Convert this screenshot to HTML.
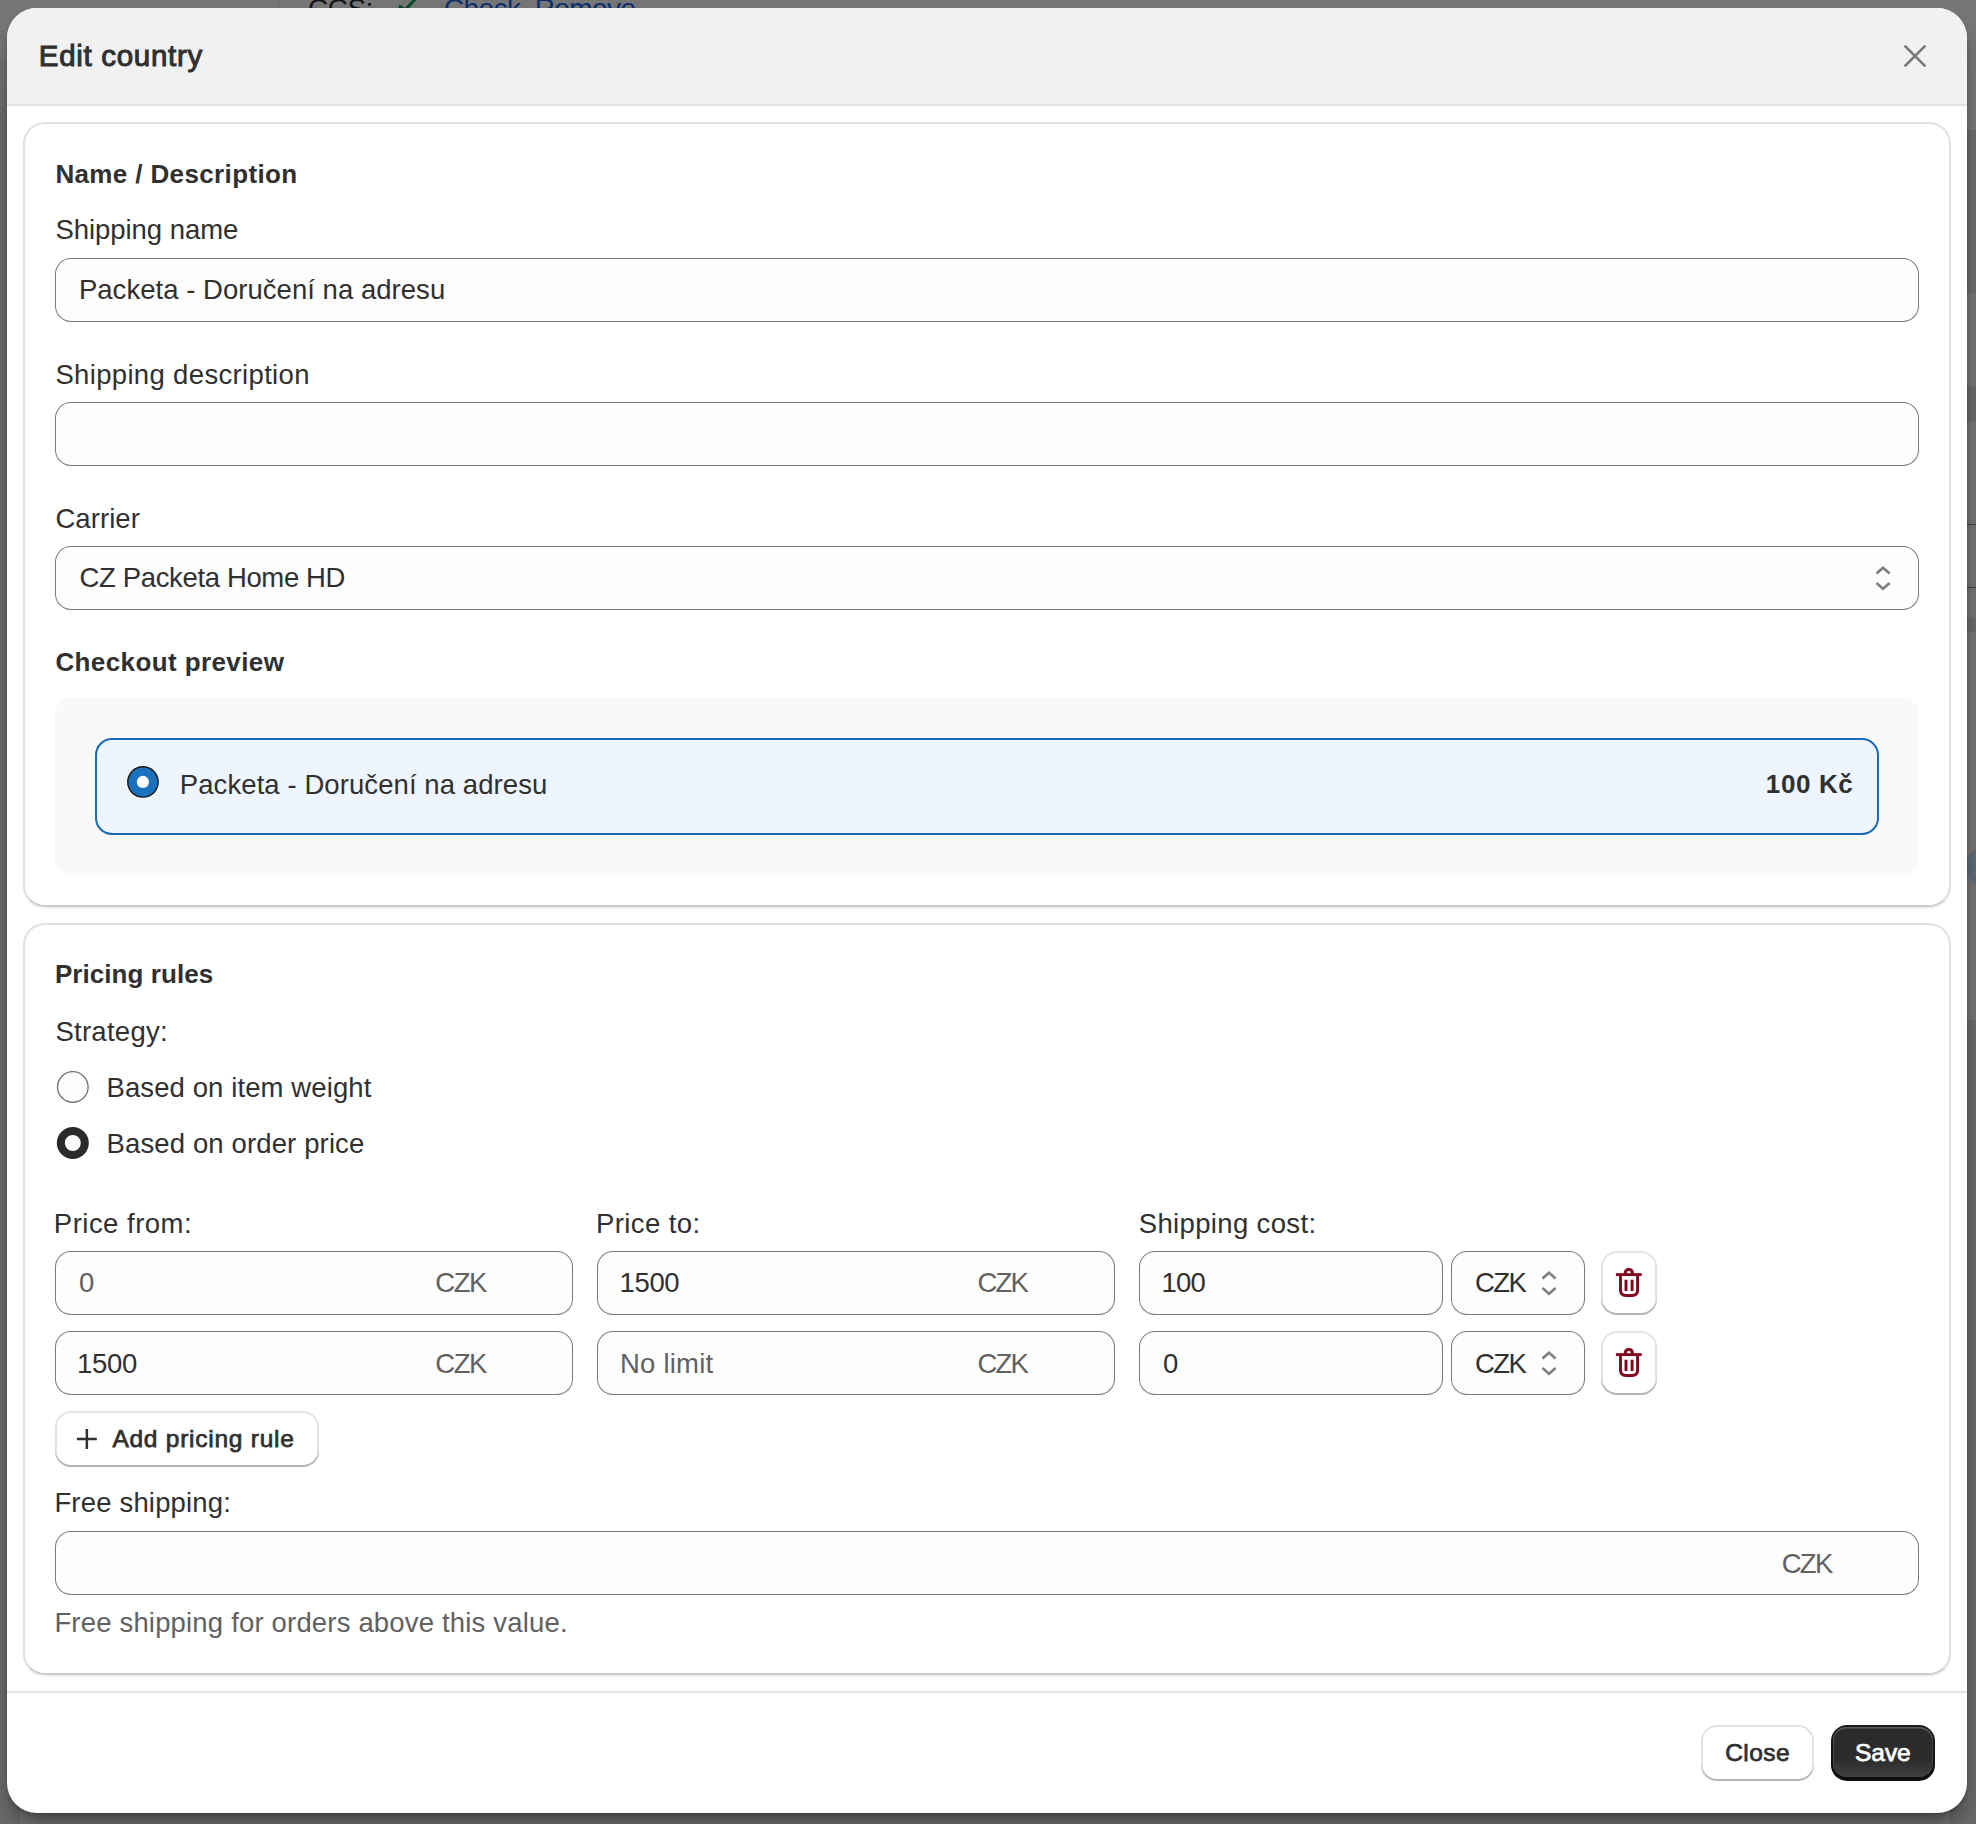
<!DOCTYPE html>
<html><head><meta charset="utf-8"><title>Edit country</title>
<style>
html,body{margin:0;padding:0;}
body{width:1976px;height:1824px;position:relative;overflow:hidden;background:#747474;font-family:"Liberation Sans",sans-serif;}
.a{position:absolute;box-sizing:border-box;}
.t{position:absolute;white-space:nowrap;line-height:1;font-family:"Liberation Sans",sans-serif;}
.modal{left:7px;top:8px;width:1960px;height:1805px;border-radius:30px;background:#ffffff;box-shadow:0 16px 24px -6px rgba(0,0,0,0.45),0 3px 5px -1px rgba(0,0,0,0.2);overflow:hidden;}
.hdr{left:7px;top:8px;width:1960px;height:98px;background:#f1f1f1;border-bottom:2px solid #e3e3e3;border-radius:30px 30px 0 0;}
.card{background:#ffffff;border:2px solid #e0e0e0;border-bottom-color:#cdcdcd;border-radius:22px;box-shadow:0 2px 0 #f0f0f0;}
.fld{background:#fdfdfd;border:1px solid #7a7a7a;border-top-color:#767a7e;border-radius:16px;}
.btn{background:#ffffff;border-radius:16px;box-shadow:inset 0 -2px 0 #b5b5b5, inset 0 0 0 2px #e3e3e3;}

</style></head>
<body>
<div class="a" style="left:0;top:0;width:1976px;height:1824px;background:#767676"></div>
<div class="a" style="left:0;top:60px;width:20px;height:1764px;background:linear-gradient(#747474,#6b6b6b 60px)"></div>
<div class="a" style="left:1950px;top:130px;width:26px;height:163px;background:#6b6b6b"></div>
<div class="a" style="left:1950px;top:293px;width:26px;height:94px;background:#747474"></div>
<div class="a" style="left:1950px;top:387px;width:26px;height:34px;background:#686868"></div>
<div class="a" style="left:1950px;top:421px;width:26px;height:600px;background:#737373"></div>
<div class="a" style="left:1950px;top:524px;width:26px;height:1px;background:#3f3f3f"></div>
<div class="a" style="left:1950px;top:587px;width:26px;height:1px;background:#3f3f3f"></div>
<div class="a" style="left:1950px;top:618px;width:26px;height:14px;background:#6a6a6a"></div>
<div class="a" style="left:1966px;top:846px;width:42px;height:42px;border-radius:50%;background:#5d6a76"></div>
<div class="a" style="left:1950px;top:1020px;width:26px;height:804px;background:#6a6a6a"></div>
<div class="a" style="left:278px;top:0;width:1px;height:10px;background:#6a6a6a"></div>
<div class="t" style="left:308px;top:-5px;font-size:28px;letter-spacing:-0.5px;color:#151515">CCS:</div>
<svg class="a" style="left:396px;top:-4px" width="28" height="14" viewBox="0 0 28 14"><path d="M3 10 L9 14 L24 -2" stroke="#0c4a2c" stroke-width="3" fill="none"/></svg>
<div class="t" style="left:444px;top:-5px;font-size:28px;letter-spacing:-0.6px;color:#0b2f6e">Check&nbsp; Remove</div>
<div class="a modal"></div>
<div class="a hdr"></div>
<svg class="a" style="left:1900px;top:41px" width="30" height="30" viewBox="0 0 30 30"><path d="M4.6 4.6 L25.4 25.4 M25.4 4.6 L4.6 25.4" stroke="#787878" stroke-width="2.7" fill="none"/></svg>
<div class="a card" style="left:23px;top:122px;width:1928px;height:785px"></div>
<div class="a card" style="left:23px;top:923px;width:1928px;height:752px"></div>
<div class="a" style="left:7px;top:1691px;width:1960px;height:2px;background:#e3e3e3"></div>
<div class="a fld" style="left:55px;top:258px;width:1864px;height:64px"></div>
<div class="a fld" style="left:55px;top:402px;width:1864px;height:64px"></div>
<div class="a fld" style="left:55px;top:546px;width:1864px;height:64px"></div>
<svg class="a" style="left:1873px;top:562px" width="20" height="32" viewBox="0 0 20 32"><path d="M3.5 11.5 L10 5.8 L16.6 11.5 M3.5 21 L10 26.7 L16.6 21" stroke="#7e7e7e" stroke-width="2.6" fill="none"/></svg>
<div class="a" style="left:55px;top:698px;width:1864px;height:177px;background:#f9f9f9;border-radius:16px"></div>
<div class="a" style="left:95px;top:738px;width:1784px;height:97px;background:#eef5fe;border:2px solid #1a6ab5;border-radius:17px"></div>
<svg class="a" style="left:120px;top:760px" width="46" height="46" viewBox="0 0 46 46"><circle cx="22.95" cy="21.9" r="15.2" fill="#1a72bf" stroke="#1a1a1a" stroke-width="1.4"/><circle cx="22.9" cy="21.95" r="6.1" fill="#ffffff"/></svg>
<svg class="a" style="left:50px;top:1064px" width="46" height="102" viewBox="0 0 46 102"><circle cx="22.8" cy="23" r="15.3" fill="#fdfdfd" stroke="#6f6f6f" stroke-width="1.3"/><circle cx="22.8" cy="79" r="12" fill="#fdfdfd" stroke="#2a2a2a" stroke-width="8"/></svg>
<div class="a fld" style="left:55px;top:1251px;width:518px;height:64px"></div>
<div class="a fld" style="left:597px;top:1251px;width:518px;height:64px"></div>
<div class="a fld" style="left:1139px;top:1251px;width:304px;height:64px"></div>
<div class="a fld" style="left:1451px;top:1251px;width:134px;height:64px"></div>
<div class="a fld" style="left:55px;top:1331px;width:518px;height:64px"></div>
<div class="a fld" style="left:597px;top:1331px;width:518px;height:64px"></div>
<div class="a fld" style="left:1139px;top:1331px;width:304px;height:64px"></div>
<div class="a fld" style="left:1451px;top:1331px;width:134px;height:64px"></div>
<svg class="a" style="left:1539px;top:1267px" width="20" height="32" viewBox="0 0 20 32"><path d="M3.5 11.5 L10 5.8 L16.6 11.5 M3.5 21 L10 26.7 L16.6 21" stroke="#7e7e7e" stroke-width="2.6" fill="none"/></svg>
<svg class="a" style="left:1539px;top:1347px" width="20" height="32" viewBox="0 0 20 32"><path d="M3.5 11.5 L10 5.8 L16.6 11.5 M3.5 21 L10 26.7 L16.6 21" stroke="#7e7e7e" stroke-width="2.6" fill="none"/></svg>
<div class="a btn" style="left:1601px;top:1251px;width:56px;height:64px"></div>
<div class="a btn" style="left:1601px;top:1331px;width:56px;height:64px"></div>
<svg class="a" style="left:1601px;top:1251px" width="56" height="64" viewBox="0 0 56 64"><g stroke="#82071c" stroke-width="2.9" fill="none"><path d="M14.9 23.6 H40.75"/><path d="M19.5 23.6 V39 Q19.5 44.5 25 44.5 H31 Q36.6 44.5 36.6 39 V23.6"/><path d="M24.25 23.6 V22.3 Q24.25 18.45 27.85 18.45 Q31.45 18.45 31.45 22.3 V23.6"/><path d="M25 28.7 V39.9 M31.1 28.7 V39.9"/></g></svg>
<svg class="a" style="left:1601px;top:1331px" width="56" height="64" viewBox="0 0 56 64"><g stroke="#82071c" stroke-width="2.9" fill="none"><path d="M14.9 23.6 H40.75"/><path d="M19.5 23.6 V39 Q19.5 44.5 25 44.5 H31 Q36.6 44.5 36.6 39 V23.6"/><path d="M24.25 23.6 V22.3 Q24.25 18.45 27.85 18.45 Q31.45 18.45 31.45 22.3 V23.6"/><path d="M25 28.7 V39.9 M31.1 28.7 V39.9"/></g></svg>
<div class="a btn" style="left:55px;top:1411px;width:264px;height:56px"></div>
<svg class="a" style="left:72px;top:1424px" width="30" height="30" viewBox="0 0 30 30"><path d="M14.85 5 V25 M4.9 15 H24.8" stroke="#303030" stroke-width="2.5" fill="none"/></svg>
<div class="a fld" style="left:55px;top:1531px;width:1864px;height:64px"></div>
<div class="a btn" style="left:1701px;top:1725px;width:113px;height:56px"></div>
<div class="a" style="left:1831px;top:1725px;width:104px;height:56px;border-radius:16px;background:linear-gradient(#1c1c1c,#0c0c0c)"></div>
<div class="a" style="left:1833px;top:1727px;width:100px;height:50px;border-radius:14px;background:linear-gradient(#2b2b2b 0%,#2c2c2c 65%,#404040 100%);box-shadow:inset 0 1.5px 0 #5c5c5c, inset 1px 0 0 #454545, inset -1px 0 0 #454545"></div>

<div class="t" style="left:38.80px;top:41.42px;font-size:29.5px;font-weight:400;color:#303030;letter-spacing:0.698px;-webkit-text-stroke:1.0px #303030">Edit country</div>
<div class="t" style="left:55.40px;top:160.59px;font-size:26px;font-weight:700;color:#303030;letter-spacing:0.369px">Name / Description</div>
<div class="t" style="left:55.40px;top:216.32px;font-size:27.5px;font-weight:400;color:#303030;letter-spacing:-0.039px">Shipping name</div>
<div class="t" style="left:78.90px;top:276.42px;font-size:27.5px;font-weight:400;color:#303030;letter-spacing:0.035px">Packeta - Doručení na adresu</div>
<div class="t" style="left:55.40px;top:361.32px;font-size:27.5px;font-weight:400;color:#303030;letter-spacing:0.339px">Shipping description</div>
<div class="t" style="left:55.40px;top:504.72px;font-size:27.5px;font-weight:400;color:#303030;letter-spacing:0.071px">Carrier</div>
<div class="t" style="left:79.50px;top:564.22px;font-size:27.5px;font-weight:400;color:#303030;letter-spacing:-0.356px">CZ Packeta Home HD</div>
<div class="t" style="left:55.40px;top:648.99px;font-size:26px;font-weight:700;color:#303030;letter-spacing:0.401px">Checkout preview</div>
<div class="t" style="left:179.80px;top:770.92px;font-size:27.5px;font-weight:400;color:#303030;letter-spacing:0.080px">Packeta - Doručení na adresu</div>
<div class="t" style="left:1765.80px;top:771.29px;font-size:26px;font-weight:700;color:#303030;letter-spacing:0.624px">100 Kč</div>
<div class="t" style="left:54.90px;top:961.49px;font-size:26px;font-weight:700;color:#303030;letter-spacing:0.072px">Pricing rules</div>
<div class="t" style="left:55.40px;top:1017.52px;font-size:27.5px;font-weight:400;color:#303030;letter-spacing:0.273px">Strategy:</div>
<div class="t" style="left:106.50px;top:1073.82px;font-size:27.5px;font-weight:400;color:#303030;letter-spacing:0.101px">Based on item weight</div>
<div class="t" style="left:106.50px;top:1130.02px;font-size:27.5px;font-weight:400;color:#303030;letter-spacing:0.132px">Based on order price</div>
<div class="t" style="left:53.80px;top:1210.02px;font-size:27.5px;font-weight:400;color:#303030;letter-spacing:0.491px">Price from:</div>
<div class="t" style="left:596.00px;top:1210.02px;font-size:27.5px;font-weight:400;color:#303030;letter-spacing:0.396px">Price to:</div>
<div class="t" style="left:1138.70px;top:1210.02px;font-size:27.5px;font-weight:400;color:#303030;letter-spacing:0.353px">Shipping cost:</div>
<div class="t" style="left:79.00px;top:1269.22px;font-size:27.5px;font-weight:400;color:#616161;letter-spacing:0.000px">0</div>
<div class="t" style="left:435.30px;top:1269.22px;font-size:27.5px;font-weight:400;color:#616161;letter-spacing:-1.479px">CZK</div>
<div class="t" style="left:619.60px;top:1269.22px;font-size:27.5px;font-weight:400;color:#303030;letter-spacing:-0.394px">1500</div>
<div class="t" style="left:977.40px;top:1269.22px;font-size:27.5px;font-weight:400;color:#616161;letter-spacing:-1.829px">CZK</div>
<div class="t" style="left:1161.40px;top:1269.22px;font-size:27.5px;font-weight:400;color:#303030;letter-spacing:-0.694px">100</div>
<div class="t" style="left:1475.00px;top:1269.22px;font-size:27.5px;font-weight:400;color:#303030;letter-spacing:-1.579px">CZK</div>
<div class="t" style="left:77.00px;top:1349.72px;font-size:27.5px;font-weight:400;color:#303030;letter-spacing:-0.294px">1500</div>
<div class="t" style="left:435.30px;top:1349.72px;font-size:27.5px;font-weight:400;color:#616161;letter-spacing:-1.479px">CZK</div>
<div class="t" style="left:619.90px;top:1349.72px;font-size:27.5px;font-weight:400;color:#616161;letter-spacing:0.238px">No limit</div>
<div class="t" style="left:977.40px;top:1349.72px;font-size:27.5px;font-weight:400;color:#616161;letter-spacing:-1.829px">CZK</div>
<div class="t" style="left:1163.00px;top:1349.72px;font-size:27.5px;font-weight:400;color:#303030;letter-spacing:0.000px">0</div>
<div class="t" style="left:1475.00px;top:1349.72px;font-size:27.5px;font-weight:400;color:#303030;letter-spacing:-1.579px">CZK</div>
<div class="t" style="left:112.38px;top:1427.06px;font-size:24.5px;font-weight:400;color:#303030;letter-spacing:0.750px;-webkit-text-stroke:0.75px #303030">Add pricing rule</div>
<div class="t" style="left:54.40px;top:1489.42px;font-size:27.5px;font-weight:400;color:#303030;letter-spacing:0.175px">Free shipping:</div>
<div class="t" style="left:1781.70px;top:1549.52px;font-size:27.5px;font-weight:400;color:#616161;letter-spacing:-1.729px">CZK</div>
<div class="t" style="left:54.40px;top:1609.32px;font-size:27.5px;font-weight:400;color:#616161;letter-spacing:0.177px">Free shipping for orders above this value.</div>
<div class="t" style="left:1725.17px;top:1740.56px;font-size:24.5px;font-weight:400;color:#303030;letter-spacing:0.435px;-webkit-text-stroke:0.75px #303030">Close</div>
<div class="t" style="left:1854.97px;top:1740.56px;font-size:24.5px;font-weight:400;color:#ffffff;letter-spacing:-0.022px;-webkit-text-stroke:0.75px #ffffff">Save</div>
</body></html>
